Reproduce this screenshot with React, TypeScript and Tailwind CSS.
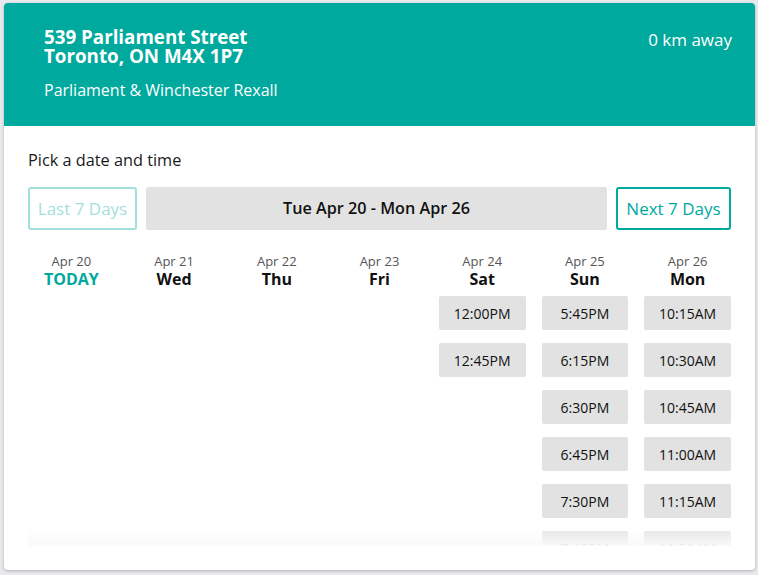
const days = [
  { date: "Apr 20", name: "TODAY", today: true, slots: [] as string[] },
  { date: "Apr 21", name: "Wed", slots: [] },
  { date: "Apr 22", name: "Thu", slots: [] },
  { date: "Apr 23", name: "Fri", slots: [] },
  { date: "Apr 24", name: "Sat", slots: ["12:00PM", "12:45PM"] },
  { date: "Apr 25", name: "Sun", slots: ["5:45PM", "6:15PM", "6:30PM", "6:45PM", "7:30PM", "7:45PM"] },
  { date: "Apr 26", name: "Mon", slots: ["10:15AM", "10:30AM", "10:45AM", "11:00AM", "11:15AM", "11:30AM"] },
];

export default function App() {
  return (
    <div className="min-h-screen bg-[#e7e9ec] pl-1 pr-[3px] pt-[3px] pb-[6px] font-['Open_Sans',sans-serif]">
      <div className="bg-white rounded-[4px] shadow-[0_1px_3px_rgba(0,0,0,0.25)] overflow-hidden">
        {/* store header */}
        <div className="bg-[#00a99e] text-white flex justify-between pl-10 pr-[23px] pt-[24px] h-[123px]">
          <div>
            <div className="text-[18.75px] font-bold leading-[19px]">
              539 Parliament Street
              <br />
              Toronto, ON M4X 1P7
            </div>
            <div className="text-[16px] mt-[15px] leading-5">Parliament &amp; Winchester Rexall</div>
          </div>
          <div className="text-[17px] leading-5 pt-[3px]">0 km away</div>
        </div>

        <div className="px-6 pt-[24px] pb-6">
          <div className="text-[16.3px] text-[#1a1a1a] leading-5">Pick a date and time</div>

          <div className="flex gap-[9px] mt-[17px] h-[43px]">
            <button className="w-[109px] rounded-[3px] border-2 border-[#a3dfda] text-[#a3dfda] text-[17px]">
              Last 7 Days
            </button>
            <div className="flex-1 bg-[#e2e2e2] rounded-[2px] flex items-center justify-center text-[16.2px] font-semibold text-[#111]">
              Tue Apr 20 - Mon Apr 26
            </div>
            <button className="w-[115px] rounded-[3px] border-2 border-[#00a99e] text-[#00a99e] text-[17px]">
              Next 7 Days
            </button>
          </div>

          <div className="relative mt-[23px] h-[293px] overflow-hidden">
            <div className="grid grid-cols-7 gap-x-4">
              {days.map((d) => (
                <div key={d.date} className="flex flex-col items-center">
                  <div className="text-[13px] text-[#555] leading-[17px]">{d.date}</div>
                  <div
                    className={
                      d.today
                        ? "text-[16px] font-bold text-[#00a99e] leading-[19px]"
                        : "text-[16px] font-bold text-[#111] leading-[19px]"
                    }
                  >
                    {d.name}
                  </div>
                  <div className="flex flex-col gap-[13px] mt-[7px] w-full">
                    {d.slots.map((s) => (
                      <div
                        key={s}
                        className="h-[34px] w-full bg-[#e2e2e2] rounded-[2px] flex items-center justify-center text-[14px] text-[#111]"
                      >
                        {s}
                      </div>
                    ))}
                  </div>
                </div>
              ))}
            </div>
            <div className="absolute left-0 right-0 bottom-0 h-[20px] bg-gradient-to-b from-white/0 to-[#fafafa]" />
          </div>
        </div>
      </div>
    </div>
  );
}
